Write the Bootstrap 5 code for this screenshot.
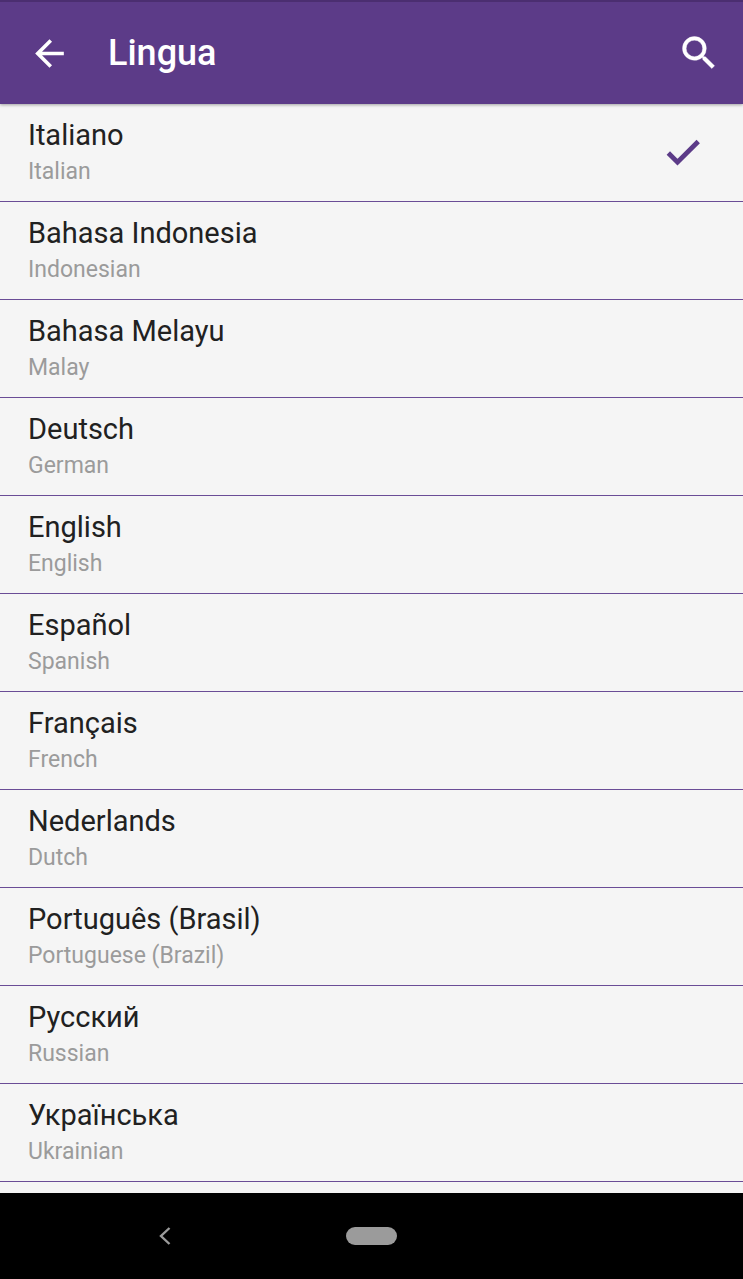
<!DOCTYPE html>
<html lang="it">
<head>
<meta charset="utf-8">
<meta name="viewport" content="width=device-width, initial-scale=1">
<title>Lingua</title>
<link href="https://cdn.jsdelivr.net/npm/bootstrap@5.3.0/dist/css/bootstrap.min.css" rel="stylesheet">
<style>
:root { --brand: #5c3b88; --surface: #f5f5f5; }
body { font-family: Roboto, "Noto Sans", sans-serif; background: var(--surface); }
.app-bar { background: var(--brand); border-top: 2px solid #4b2e70; box-shadow: 0 1px 3px rgba(0,0,0,.35); padding: 29px 22px 29px 28px; z-index: 1; }
.app-bar h1 { font-size: 36px; line-height: 44px; font-weight: 500; margin: 0 0 0 37px; }
.icon-btn { border: 0; background: none; padding: 0; line-height: 0; }
.lang-row { border: 0; border-bottom: 1px solid #6a4c96; background: var(--surface); padding: 12px 38px 11px 28px; }
.lang-name { font-size: 29px; line-height: 38px; color: #212121; }
.lang-sub { font-size: 23px; line-height: 36px; color: #9b9b9b; }
.lang-check { color: var(--brand); }
.nav-keys { background: #000; padding: 34px 62px; }
.nav-keys button { color: #9b9b9b; }
.home-pill { width: 51px; height: 18px; background: #9b9b9b; }
</style>
</head>
<body>
<div class="d-flex flex-column vh-100 overflow-hidden">
  <header class="app-bar d-flex align-items-center flex-shrink-0 text-white position-relative">
    <button type="button" class="icon-btn text-white" aria-label="Indietro"><svg width="43" height="43" viewBox="0 0 24 24" fill="currentColor"><path d="M20 11H7.830l5.590-5.590L12 4l-8 8 8 8 1.410-1.410L7.830 13H20z"/></svg></button>
    <h1 class="flex-grow-1">Lingua</h1>
    <button type="button" class="icon-btn text-white" aria-label="Cerca"><svg width="44" height="44" viewBox="0 0 24 24" fill="currentColor" stroke="currentColor" stroke-width=".2"><path d="M15.500 14h-.790l-.280-.270A6.470 6.470 0 0 0 16 9.500 6.500 6.500 0 1 0 9.500 16c1.610 0 3.090-.590 4.230-1.570l.270.280v.790l5 4.990L20.490 19zm-6 0a4.500 4.500 0 1 1 0-9 4.500 4.500 0 0 1 0 9z"/></svg></button>
  </header>
  <main class="list-group flex-grow-1 overflow-hidden rounded-0" id="langs"></main>
  <nav class="nav-keys flex-shrink-0" aria-label="Sistema">
    <div class="row row-cols-3 g-0 align-items-center">
      <div class="col d-flex justify-content-center"><button type="button" class="icon-btn" aria-label="Indietro"><svg class="d-block" width="12" height="18" viewBox="0 0 12 18" fill="none" stroke="currentColor" stroke-width="2.400"><path d="M10.500 1L2 9l8.500 8"/></svg></button></div>
      <div class="col d-flex justify-content-center"><button type="button" class="icon-btn home-pill rounded-pill" aria-label="Home"></button></div>
    </div>
  </nav>
</div>
<script src="https://cdn.jsdelivr.net/npm/bootstrap@5.3.0/dist/js/bootstrap.bundle.min.js"></script>
<script>
const langs = [
  ["Italiano", "Italian"], ["Bahasa Indonesia", "Indonesian"], ["Bahasa Melayu", "Malay"],
  ["Deutsch", "German"], ["English", "English"], ["Español", "Spanish"], ["Français", "French"],
  ["Nederlands", "Dutch"], ["Português (Brasil)", "Portuguese (Brazil)"],
  ["Русский", "Russian"], ["Українська", "Ukrainian"]
];
const check = '<svg class="lang-check" width="44" height="44" viewBox="0 0 24 24" fill="none" stroke="currentColor" stroke-width="2.600"><path d="M4 12l5 5L20.300 5.700"/></svg>';
document.getElementById("langs").innerHTML = langs.map(([name, english], i) => `
  <button type="button" class="list-group-item lang-row rounded-0 d-flex align-items-center justify-content-between flex-shrink-0 text-start">
    <span><span class="d-block lang-name">${name}</span><span class="d-block lang-sub">${english}</span></span>
    ${i === 0 ? check : ""}
  </button>`).join("");
</script>
</body>
</html>
